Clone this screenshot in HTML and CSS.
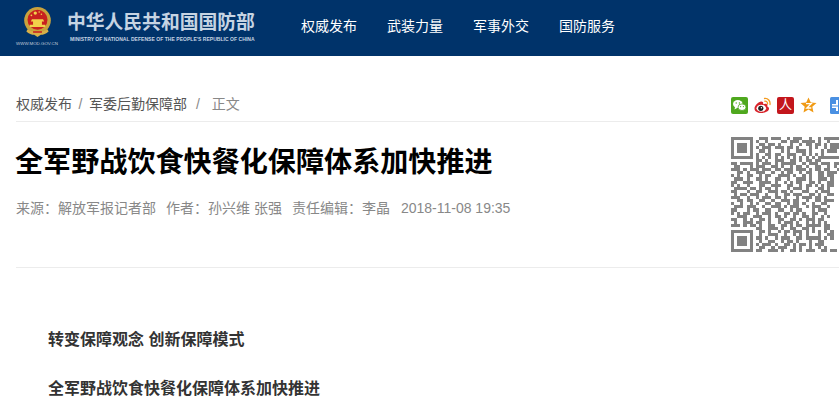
FILE: index.html
```html
<!DOCTYPE html>
<html lang="zh-CN">
<head>
    <meta charset="UTF-8">
    <title>全军野战饮食快餐化保障体系加快推进</title>
    <link rel="stylesheet" href="styles.css">
</head>
<body>
    <header class="site-header">
        <div class="logo">
            <div class="emblem-box">
                <svg class="emblem" viewBox="0 0 24 27" width="27" height="30">
                    <circle cx="12" cy="12" r="12" fill="#c9a23c"/>
                    <circle cx="12" cy="11.500" r="9" fill="#c8201f"/>
                    <circle cx="10" cy="5.500" r="1.500" fill="#f2d04a"/>
                    <circle cx="6.500" cy="7.500" r=".8" fill="#f2d04a"/>
                    <circle cx="13.500" cy="4.500" r=".7" fill="#f2d04a"/>
                    <circle cx="15.500" cy="6.500" r=".7" fill="#f2d04a"/>
                    <path d="M7 11h10l1 2H6zM8 13h8v3H8zM5 16h14v2H5z" fill="#f2d04a"/>
                    <path d="M3 20c4 3 14 3 18 0l1 2c-2 2-5 3-7 3l-3 2-3-2c-2 0-5-1-7-3z" fill="#d8b048"/>
                    <path d="M8 22.500h8" stroke="#c8201f" stroke-width="1.400"/>
                </svg>
                <span class="logo-url">WWW.MOD.GOV.CN</span>
            </div>
            <div class="logo-text">
                <strong>中华人民共和国国防部</strong>
                <span>MINISTRY OF NATIONAL DEFENSE OF THE PEOPLE'S REPUBLIC OF CHINA</span>
            </div>
        </div>
        <nav class="main-nav">
            <a href="#">权威发布</a>
            <a href="#">武装力量</a>
            <a href="#">军事外交</a>
            <a href="#">国防服务</a>
        </nav>
    </header>

    <main class="article">
        <div class="crumb-bar">
            <div class="crumbs">
                <a href="#">权威发布</a><i>/</i><a href="#">军委后勤保障部</a><i class="last">/</i><span>正文</span>
            </div>
            <div class="share">
                <svg viewBox="0 0 17 17" width="17" height="17">
                    <rect width="17" height="17" rx="2" fill="#4fa81e"/>
                    <ellipse cx="6.800" cy="7" rx="4.800" ry="4" fill="#fff"/>
                    <path d="M4 10l-.5 2.500L7 10.500z" fill="#fff"/>
                    <ellipse cx="11" cy="10.200" rx="4" ry="3.300" fill="#fff" stroke="#4fa81e" stroke-width=".8"/>
                    <circle cx="5.200" cy="6" r=".7" fill="#4fa81e"/>
                    <circle cx="8.400" cy="6" r=".7" fill="#4fa81e"/>
                    <circle cx="9.600" cy="9.600" r=".6" fill="#4fa81e"/>
                    <circle cx="12.400" cy="9.600" r=".6" fill="#4fa81e"/>
                </svg>
                <svg viewBox="0 0 17 17" width="17" height="17">
                    <path d="M7 16C3.500 16 .5 14.300.5 11.500.5 8.500 4.500 4.500 7.300 4.500c1.800 0 2.200 1.300 1.800 2.800 2-.8 4.300-.8 4.300 1.200 0 .5-.2.900-.2.900 1.100.4 1.800 1 1.800 2.200C15.200 14.200 11.500 16 7 16z" fill="#d8232a"/>
                    <ellipse cx="7.300" cy="11.200" rx="4.800" ry="3.500" fill="#fff"/>
                    <circle cx="6.800" cy="11.300" r="2.600" fill="#222"/>
                    <circle cx="7.400" cy="10.800" r=".7" fill="#fff"/>
                    <path d="M10.500 1.500c3.500-.5 6 2.500 5.500 6M10.800 4.200c1.800-.2 2.900 1.100 2.700 2.800" fill="none" stroke="#f39a1f" stroke-width="1.300" stroke-linecap="round"/>
                </svg>
                <span class="renren">人</span>
                <svg viewBox="0 0 17 17" width="17" height="17">
                    <path d="M8.500.5l2.300 5 5.700.6-4.200 3.700 1.200 5.600-5-2.900-5 2.900 1.200-5.600L.5 6.100l5.700-.6z" fill="#f09a14"/>
                    <path d="M6 6.700h5.200L6.800 11h4.500" fill="none" stroke="#fff" stroke-width="1.300"/>
                </svg>
                <svg class="share-blue" viewBox="0 0 17 17" width="17" height="17">
                    <rect width="17" height="17" rx="1.500" fill="#4a90e2"/>
                    <path d="M6 3h5v4h4v4h-4v3H6v-3H2V7h4z" fill="#fff"/>
                    <path d="M2 9h13M8.500 3v11" stroke="#4a90e2" stroke-width="1"/>
                </svg>
            </div>
        </div>

        <div class="article-head">
            <div class="head-text">
                <h1>全军野战饮食快餐化保障体系加快推进</h1>
                <div class="meta">
                    <span>来源：解放军报记者部</span>
                    <span>作者：孙兴维 张强</span>
                    <span>责任编辑：李晶</span>
                    <span class="meta-date">2018-11-08 19:35</span>
                </div>
            </div>
            <svg class="qrcode" viewBox="0 0 37 37" width="115" height="115" shape-rendering="crispEdges">
                <path fill="none" stroke="#828282" d="M0 .5h7m2 0h3m1 0h3m2 0h1m1 0h3m2 0h1m2 0h1m1 0h7
                M0 1.500h1m5 0h1m1 0h1m2 0h1m4 0h2m1 0h3m1 0h4m1 0h1m2 0h1m5 0h1
                M0 2.500h1m1 0h3m1 0h1m2 0h2m1 0h2m1 0h1m3 0h1m2 0h1m1 0h2m1 0h2m1 0h1m1 0h3m1 0h1
                M0 3.500h1m1 0h3m1 0h1m1 0h1m1 0h3m1 0h3m1 0h2m1 0h1m3 0h1m1 0h1m2 0h1m1 0h3m1 0h1
                M0 4.500h1m1 0h3m1 0h1m2 0h2m1 0h1m3 0h1m1 0h1m2 0h3m1 0h1m3 0h1m1 0h3m1 0h1
                M0 5.500h1m5 0h1m1 0h1m2 0h2m1 0h2m2 0h3m2 0h1m1 0h1m1 0h1m1 0h1m5 0h1
                M0 6.500h7m1 0h1m1 0h1m1 0h1m1 0h1m1 0h1m1 0h1m1 0h1m1 0h1m1 0h1m1 0h1m1 0h7
                M8 7.500h2m1 0h1m2 0h3m2 0h2m1 0h1m1 0h2m1 0h2
                M0 8.500h2m1 0h4m1 0h1m1 0h3m1 0h1m1 0h5m2 0h1m1 0h3m1 0h3m1 0h2m1 0h1
                M1 9.500h2m3 0h1m1 0h3m2 0h2m1 0h1m2 0h1m1 0h2m1 0h1m2 0h2m2 0h1m1 0h1m1 0h2
                M0 10.500h3m1 0h1m1 0h3m1 0h3m1 0h2m1 0h3m1 0h3m1 0h1m1 0h2m1 0h2m2 0h1
                M2 11.500h2m1 0h1m2 0h3m2 0h1m2 0h1m1 0h2m2 0h1m1 0h2m2 0h2m1 0h3
                M0 12.500h1m1 0h1m2 0h2m2 0h1m1 0h2m2 0h4m1 0h1m2 0h1m1 0h1m2 0h2m1 0h2
                M1 13.500h3m1 0h1m2 0h2m1 0h1m2 0h2m2 0h1m2 0h3m1 0h1m2 0h3m1 0h1
                M0 14.500h2m2 0h3m2 0h4m1 0h1m2 0h1m1 0h1m1 0h2m2 0h2m1 0h1m2 0h2
                M0 15.500h1m1 0h1m2 0h1m3 0h2m2 0h3m2 0h2m2 0h1m1 0h2m1 0h1m1 0h1m1 0h2
                M1 16.500h4m1 0h2m1 0h1m1 0h2m1 0h1m3 0h1m1 0h3m1 0h1m3 0h2m1 0h1
                M0 17.500h2m3 0h1m2 0h2m2 0h3m1 0h2m1 0h1m3 0h2m2 0h1m1 0h3
                M1 18.500h1m1 0h2m1 0h3m2 0h1m2 0h1m2 0h2m1 0h3m2 0h2m1 0h1m2 0h2
                M0 19.500h3m2 0h1m2 0h1m1 0h3m1 0h2m1 0h1m3 0h1m1 0h3m1 0h2m1 0h1
                M2 20.500h2m1 0h2m2 0h2m2 0h1m2 0h3m1 0h2m2 0h1m2 0h2m1 0h3
                M0 21.500h1m2 0h1m2 0h1m1 0h1m2 0h2m1 0h2m2 0h1m1 0h2m1 0h1m2 0h1m2 0h2
                M1 22.500h3m1 0h3m2 0h1m2 0h3m1 0h1m1 0h3m2 0h1m1 0h3m2 0h1
                M0 23.500h2m3 0h1m1 0h2m2 0h2m2 0h2m2 0h1m1 0h2m3 0h1m1 0h3
                M0 24.500h1m1 0h1m1 0h2m2 0h1m1 0h3m1 0h1m2 0h2m1 0h2m1 0h1m2 0h2m2 0h1
                M2 25.500h3m2 0h3m2 0h1m1 0h2m1 0h1m2 0h1m2 0h2m1 0h1m2 0h1m1 0h1
                M0 26.500h2m2 0h1m1 0h1m2 0h2m1 0h1m2 0h2m2 0h2m1 0h1m1 0h3m1 0h2
                M1 27.500h1m2 0h3m1 0h2m2 0h1m2 0h1m1 0h3m1 0h1m2 0h1m1 0h1m1 0h1m1 0h1
                M0 28.500h3m1 0h1m1 0h2m1 0h1m2 0h2m2 0h2m1 0h1m1 0h2m1 0h5m1 0h2
                M8 29.500h2m2 0h3m1 0h1m2 0h2m2 0h2m1 0h1m3 0h2
                M0 30.500h7m2 0h2m1 0h1m2 0h1m1 0h2m1 0h3m1 0h1m1 0h1m1 0h1m1 0h1m1 0h1
                M0 31.500h1m5 0h1m2 0h1m2 0h3m2 0h1m2 0h1m1 0h1m1 0h1m3 0h1m2 0h2
                M0 32.500h1m1 0h3m1 0h1m1 0h2m1 0h1m2 0h1m1 0h3m2 0h2m1 0h5m1 0h1m1 0h1
                M0 33.500h1m1 0h3m1 0h1m2 0h1m2 0h2m2 0h1m1 0h2m1 0h1m3 0h1m2 0h2
                M0 34.500h1m1 0h3m1 0h1m1 0h1m1 0h3m1 0h1m2 0h2m1 0h1m1 0h2m1 0h1m1 0h3
                M0 35.500h1m5 0h1m2 0h2m2 0h1m1 0h3m2 0h1m1 0h1m2 0h1m2 0h1m1 0h1
                M0 36.500h7m1 0h2m2 0h3m1 0h1m2 0h2m1 0h1m1 0h3m2 0h2m1 0h2"/>
            </svg>
        </div>

        <div class="article-body">
            <p>转变保障观念 创新保障模式</p>
            <p>全军野战饮食快餐化保障体系加快推进</p>
        </div>
    </main>
</body>
</html>
```

FILE: styles.css
```css
html, body {
    margin: 0;
    padding: 0;
    overflow: hidden;
}
body {
    width: 839px;
    height: 414px;
    font-family: "Liberation Sans", "Noto Sans CJK SC", sans-serif;
    background: #fff;
    color: #333;
}
a {
    color: inherit;
    text-decoration: none;
}

/* header */
.site-header {
    display: flex;
    height: 56px;
    background: #00336a;
}
.logo {
    display: flex;
    gap: 9px;
    width: 301px;
    padding: 7px 0 0 16px;
    box-sizing: border-box;
}
.emblem-box {
    display: flex;
    flex-direction: column;
    align-items: center;
    width: 42px;
}
.logo-url {
    margin-top: 4px;
    font-size: 4.4px;
    line-height: 6px;
    white-space: nowrap;
    color: #c6d0dc;
}
.logo-text {
    display: flex;
    flex-direction: column;
    padding-top: 4px;
}
.logo-text strong {
    font-size: 18.800px;
    line-height: 24px;
    white-space: nowrap;
    color: #c6d4e3;
}
.logo-text span {
    margin: 1px 0 0 3px;
    font-size: 5px;
    line-height: 6px;
    letter-spacing: .04px;
    white-space: nowrap;
    font-weight: bold;
    color: #c6d4e3;
}
.main-nav {
    display: flex;
    gap: 30px;
    align-items: center;
    padding-bottom: 6px;
    font-size: 14px;
    color: #fff;
}

/* article */
.article {
    width: 830px;
    padding-left: 16px;
}
.crumb-bar {
    display: flex;
    justify-content: space-between;
    height: 66px;
    padding-top: 38px;
    box-sizing: border-box;
    border-bottom: 1px solid #ececec;
}
.crumbs {
    font-size: 14px;
    line-height: 20px;
    color: #555;
}
.crumbs i {
    margin: 0 6.500px;
    font-style: normal;
    color: #888;
}
.crumbs i.last {
    margin: 0 12px 0 9px;
}
.crumbs span {
    color: #888;
}
.share {
    display: flex;
    gap: 6px;
    padding-top: 3px;
    width: 115px;
    height: 17px;
}
.share svg {
    flex-shrink: 0;
}
.share .share-blue {
    margin-left: 7px;
}
.renren {
    flex-shrink: 0;
    width: 17px;
    height: 17px;
    border-radius: 2px;
    background: #c3161c;
    color: #fff;
    font-size: 13px;
    line-height: 16px;
    text-align: center;
}
.article-head {
    display: flex;
    justify-content: space-between;
    height: 145px;
    border-bottom: 1px solid #ececec;
}
.article-head h1 {
    margin: 21px 0 0 -1px;
    font-size: 28.100px;
    line-height: 40px;
    color: #000;
}
.meta {
    display: flex;
    gap: 10px;
    margin-top: 15px;
    font-family: "Liberation Sans", "Noto Sans CJK TC", sans-serif;
    font-size: 14px;
    line-height: 20px;
    color: #888;
}
.meta-date {
    margin-left: 1px;
}
.qrcode {
    flex-shrink: 0;
    margin-top: 15px;
}
.article-body {
    padding: 60px 0 0 32px;
}
.article-body p {
    margin: 0 0 25px;
    font-size: 16px;
    line-height: 24px;
    font-weight: bold;
    color: #333;
}
```
